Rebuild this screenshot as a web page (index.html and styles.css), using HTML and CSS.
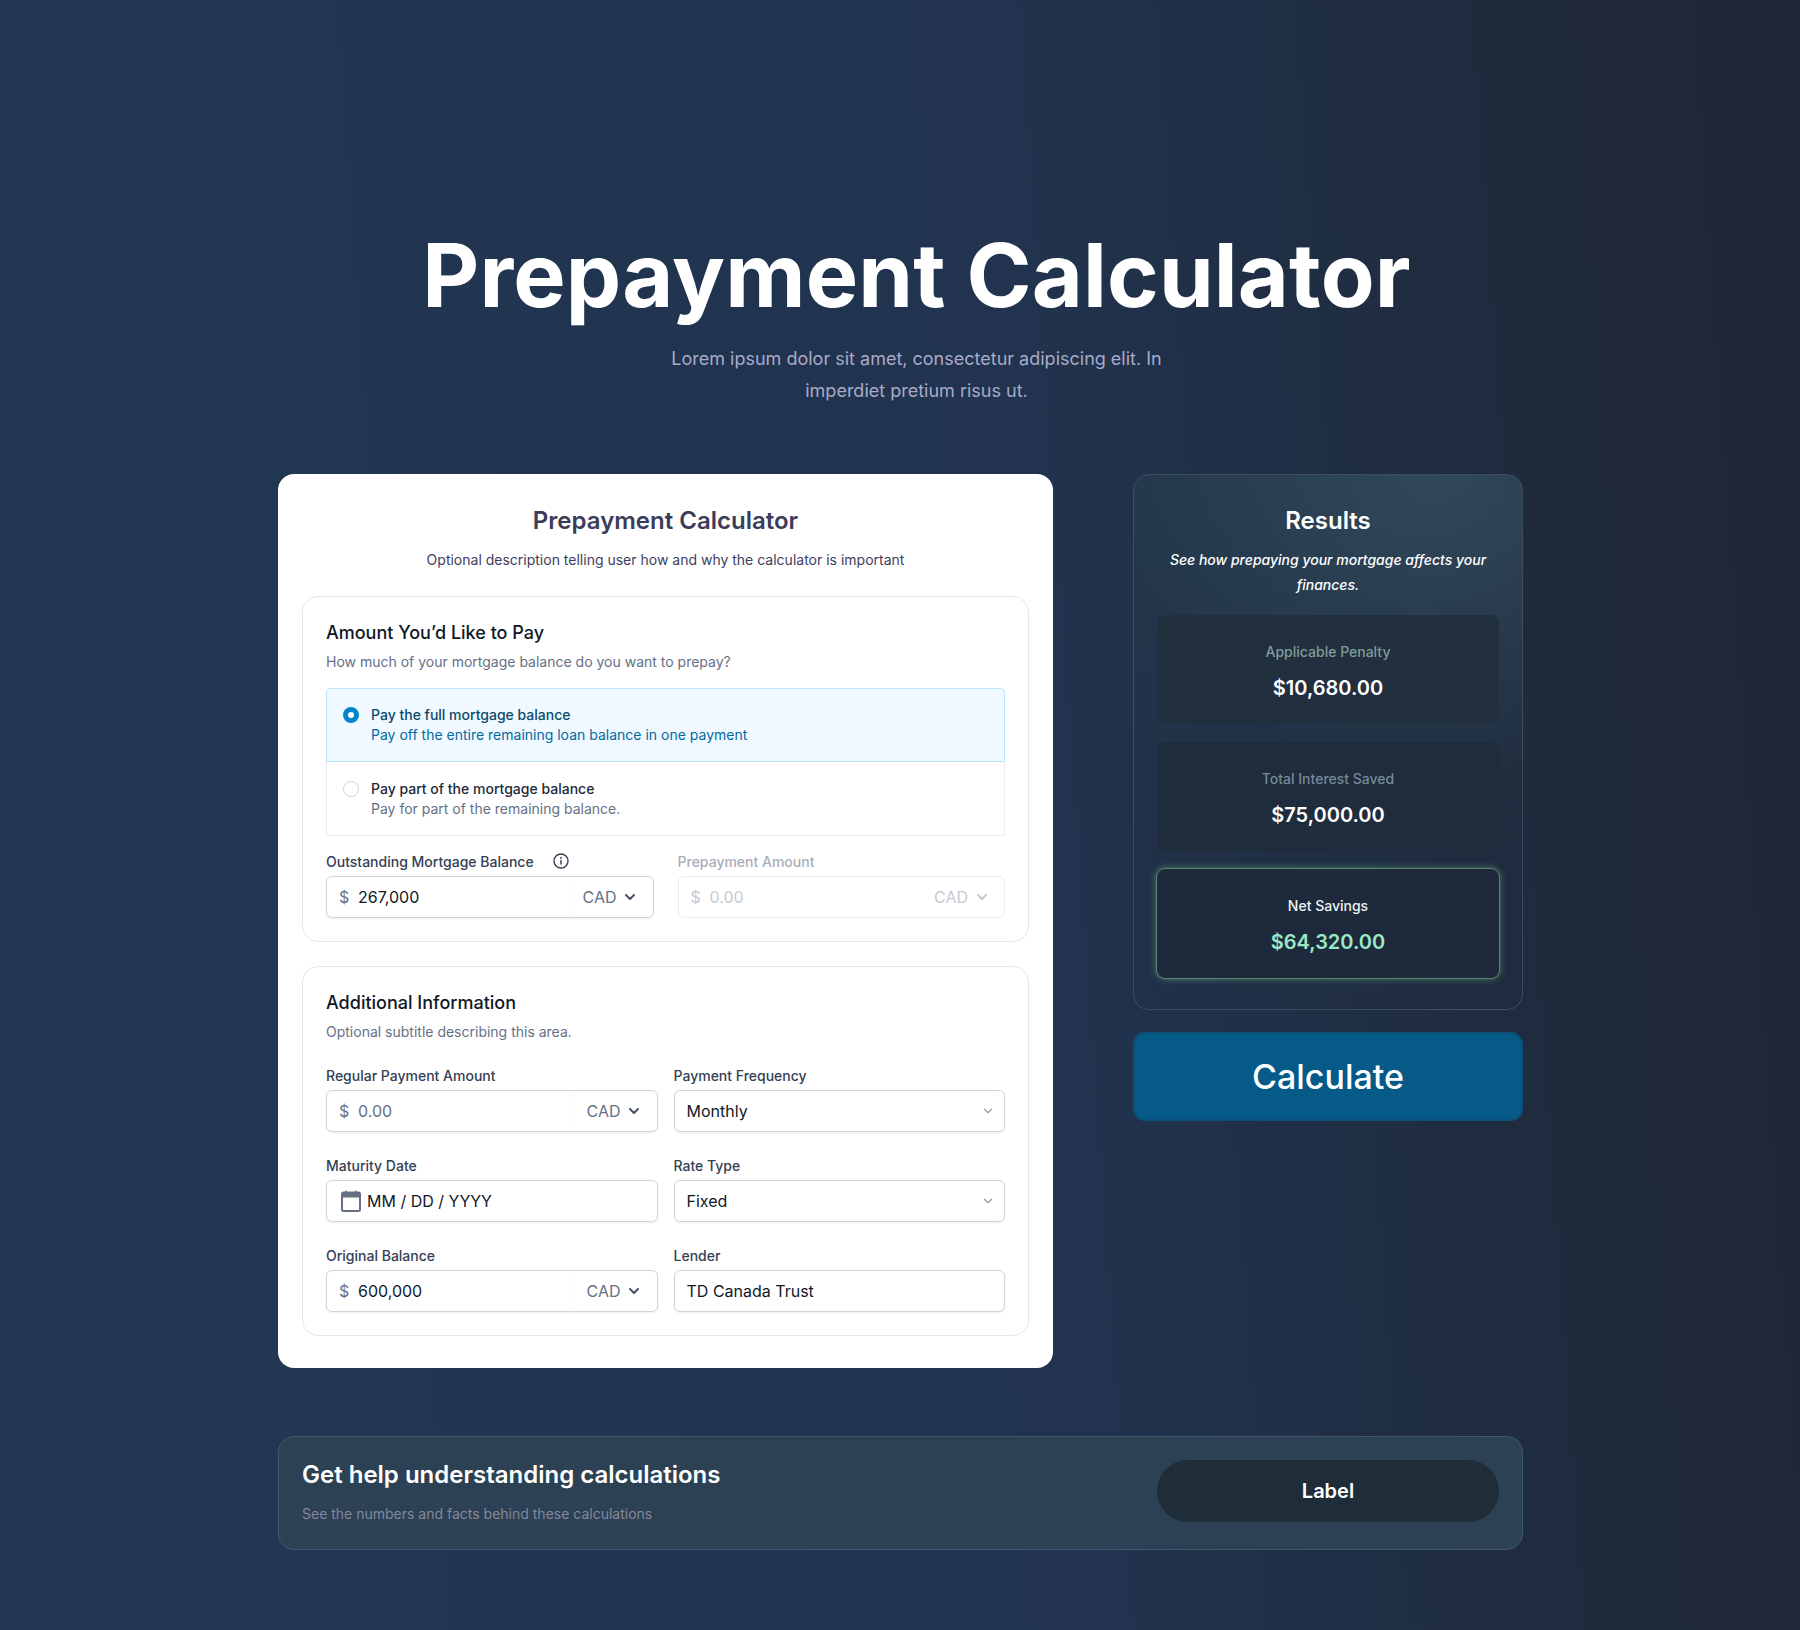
FILE: index.html
```html
<!DOCTYPE html>
<html lang="en">
<head>
<meta charset="utf-8">
<title>Prepayment Calculator</title>
<link rel="stylesheet" href="styles.css">
</head>
<body>
<div class="page">
  <header class="hero">
    <h1>Prepayment Calculator</h1>
    <p>Lorem ipsum dolor sit amet, consectetur adipiscing elit. In imperdiet pretium risus ut.</p>
  </header>

  <main class="columns">
    <section class="card">
      <h2>Prepayment Calculator</h2>
      <p class="card-desc">Optional description telling user how and why the calculator is important</p>

      <div class="panel">
        <h3>Amount You’d Like to Pay</h3>
        <p class="panel-sub">How much of your mortgage balance do you want to prepay?</p>

        <div class="radios">
          <div class="radio-row selected">
            <span class="radio"></span>
            <div>
              <div class="radio-title">Pay the full mortgage balance</div>
              <div class="radio-sub">Pay off the entire remaining loan balance in one payment</div>
            </div>
          </div>
          <div class="radio-row">
            <span class="radio"></span>
            <div>
              <div class="radio-title">Pay part of the mortgage balance</div>
              <div class="radio-sub">Pay for part of the remaining balance.</div>
            </div>
          </div>
        </div>

        <div class="grid wide-gap">
          <div class="field">
            <label class="label">Outstanding Mortgage Balance
              <svg class="info" viewBox="0 0 16 16" fill="none"><circle cx="8" cy="8" r="7" stroke="#344054" stroke-width="1.4"/><path d="M8 7.4v3.6" stroke="#344054" stroke-width="1.4" stroke-linecap="round"/><circle cx="8" cy="5" r=".9" fill="#344054"/></svg>
            </label>
            <div class="input">
              <span class="cur">$</span><span class="val">267,000</span>
              <span class="addon">CAD<svg class="chev" viewBox="0 0 16 16" fill="none"><path d="M4 6l4 4 4-4" stroke="#475467" stroke-width="2" stroke-linecap="round" stroke-linejoin="round"/></svg></span>
            </div>
          </div>
          <div class="field disabled">
            <label class="label">Prepayment Amount</label>
            <div class="input">
              <span class="cur">$</span><span class="val">0.00</span>
              <span class="addon">CAD<svg class="chev" viewBox="0 0 16 16" fill="none"><path d="M4 6l4 4 4-4" stroke="#c4c9d2" stroke-width="2" stroke-linecap="round" stroke-linejoin="round"/></svg></span>
            </div>
          </div>
        </div>
      </div>

      <div class="panel">
        <h3>Additional Information</h3>
        <p class="panel-sub">Optional subtitle describing this area.</p>

        <div class="grid form-grid">
          <div class="field">
            <label class="label">Regular Payment Amount</label>
            <div class="input">
              <span class="cur">$</span><span class="val muted">0.00</span>
              <span class="addon">CAD<svg class="chev" viewBox="0 0 16 16" fill="none"><path d="M4 6l4 4 4-4" stroke="#475467" stroke-width="2" stroke-linecap="round" stroke-linejoin="round"/></svg></span>
            </div>
          </div>
          <div class="field">
            <label class="label">Payment Frequency</label>
            <div class="input select">
              <span class="val">Monthly</span>
              <svg class="chev-sm" viewBox="0 0 10 10" fill="none"><path d="M1.5 3.2L5 6.8l3.5-3.6" stroke="#98a2b3" stroke-width="1.4" stroke-linecap="round" stroke-linejoin="round"/></svg>
            </div>
          </div>
          <div class="field">
            <label class="label">Maturity Date</label>
            <div class="input date">
              <svg class="cal" viewBox="0 0 20 22" fill="none"><rect x="1" y="2.5" width="18" height="18.5" rx="1.5" stroke="#667085" stroke-width="2"/><rect x="1" y="2.5" width="18" height="5" fill="#667085"/><path d="M5 .5v3M15 .5v3" stroke="#667085" stroke-width="1.4"/></svg>
              <span class="val">MM / DD / YYYY</span>
            </div>
          </div>
          <div class="field">
            <label class="label">Rate Type</label>
            <div class="input select">
              <span class="val">Fixed</span>
              <svg class="chev-sm" viewBox="0 0 10 10" fill="none"><path d="M1.5 3.2L5 6.8l3.5-3.6" stroke="#98a2b3" stroke-width="1.4" stroke-linecap="round" stroke-linejoin="round"/></svg>
            </div>
          </div>
          <div class="field">
            <label class="label">Original Balance</label>
            <div class="input">
              <span class="cur">$</span><span class="val">600,000</span>
              <span class="addon">CAD<svg class="chev" viewBox="0 0 16 16" fill="none"><path d="M4 6l4 4 4-4" stroke="#475467" stroke-width="2" stroke-linecap="round" stroke-linejoin="round"/></svg></span>
            </div>
          </div>
          <div class="field">
            <label class="label">Lender</label>
            <div class="input select">
              <span class="val">TD Canada Trust</span>
            </div>
          </div>
        </div>
      </div>
    </section>

    <aside class="side">
      <section class="results">
        <h2>Results</h2>
        <p class="results-desc">See how prepaying your mortgage affects your finances.</p>
        <div class="stats">
          <div class="stat stat-a">
            <div class="stat-label">Applicable Penalty</div>
            <div class="stat-value">$10,680.00</div>
          </div>
          <div class="stat stat-b">
            <div class="stat-label">Total Interest Saved</div>
            <div class="stat-value">$75,000.00</div>
          </div>
          <div class="stat stat-c">
            <div class="stat-label">Net Savings</div>
            <div class="stat-value">$64,320.00</div>
          </div>
        </div>
      </section>
      <button class="calc" type="button">Calculate</button>
    </aside>
  </main>

  <section class="help">
    <div>
      <h2>Get help understanding calculations</h2>
      <p>See the numbers and facts behind these calculations</p>
    </div>
    <button class="pill" type="button">Label</button>
  </section>
</div>
</body>
</html>
```

FILE: styles.css
```css
* { box-sizing: border-box; }
html, body { margin: 0; padding: 0; }
body {
  font-family: Inter, "Liberation Sans", sans-serif;
  background: linear-gradient(86deg, #223853 0%, #21334e 58%, #1f2a3c 85%, #1f2739 100%);
  min-height: 1630px;
  color: #101828;
}
.page { width: 1245px; margin-left: 278px; padding-bottom: 80px; }
h1, h2, h3, p { margin: 0; }

.hero { padding: 222px 0 0 32px; text-align: center; }
.hero h1 { font-size: 88px; line-height: 106px; font-weight: 700; letter-spacing: .15px; color: #fff; }
.hero p { width: 520px; margin: 15px auto 0; font-size: 18px; line-height: 32px; color: #a9a9c9; }

.columns { display: flex; align-items: flex-start; gap: 80px; margin-top: 67px; }

.card { width: 775px; height: 894px; padding: 24px; background: #fff; border-radius: 16px; }
.card h2 { margin-top: 1px; font-size: 24px; line-height: 44px; font-weight: 600; color: #3c3c5a; text-align: center; }
.card-desc { margin-top: 5px; font-size: 14px; line-height: 24px; color: #40405e; text-align: center; }

.panel { margin-top: 24px; padding: 23px; border: 1px solid #e4e7ec; border-radius: 16px; }
.panel h3 { font-size: 18px; line-height: 26px; font-weight: 500; color: #101828; }
.panel-sub { margin-top: 4px; font-size: 14px; line-height: 24px; color: #667085; }

.radios { margin-top: 14px; }
.radio-row { display: flex; gap: 12px; height: 74px; padding: 17px 16px 0; border: 1px solid #eaecf0; border-top: 0; }
.radio-row.selected { padding-top: 16px; border: 1px solid #b9e6fe; border-radius: 4px 4px 0 0; background: #f0f9ff; }
.radio { flex: none; width: 16px; height: 16px; margin-top: 2px; border: 1px solid #d0d5dd; border-radius: 50%; background: #fff; }
.selected .radio { border: 5px solid #0086c9; }
.radio-title { font-size: 14px; line-height: 20px; font-weight: 500; color: #1d2939; }
.radio-sub { font-size: 14px; line-height: 20px; color: #667085; }
.selected .radio-title { color: #0b4a6f; }
.selected .radio-sub { color: #026aa2; }

.grid { display: grid; grid-template-columns: 1fr 1fr; }
.wide-gap { column-gap: 24px; margin-top: 16px; }
.form-grid { column-gap: 16px; row-gap: 24px; margin-top: 22px; }

.label { display: flex; align-items: center; height: 20px; margin-bottom: 4px; padding-bottom: 1px; font-size: 14px; font-weight: 500; color: #344054; }
.info { width: 16px; height: 16px; margin-left: 19px; margin-top: -1px; }

.input {
  display: flex; align-items: center; height: 42px; padding-left: 12px;
  background: #fff; border: 1px solid #d0d5dd; border-radius: 6px;
  box-shadow: 0 1px 2px rgba(16, 24, 40, .08);
  font-size: 16px;
}
.cur { width: 19px; color: #667085; }
.val { color: #101828; }
.val.muted { color: #667085; }
.addon {
  display: flex; align-items: center; gap: 6px; width: 84px; height: 100%; margin-left: auto;
  padding-left: 13px; border-left: 1px solid #fafbfc; color: #667085;
}
.chev { width: 16px; height: 16px; }
.select { padding-right: 11px; justify-content: space-between; }
.chev-sm { width: 10px; height: 10px; }
.date { padding-left: 14px; gap: 6px; }
.cal { width: 20px; height: 22px; }

.disabled .label { color: #a8adb8; }
.disabled .input { border-color: #eaecf0; box-shadow: none; }
.disabled .addon { border-left-color: transparent; }
.disabled .cur, .disabled .val, .disabled .addon { color: #c4c9d2; }

.side { display: flex; flex-direction: column; gap: 22px; width: 390px; }
.results {
  height: 536px; padding: 24px 23px; border: 1px solid #3c4e5d; border-radius: 16px;
  background:
    radial-gradient(330px 300px at 78% 0%, rgba(62, 92, 112, .5), rgba(62, 92, 112, 0) 100%),
    linear-gradient(180deg, rgba(38, 60, 74, .55), rgba(31, 43, 60, .2) 75%);
  text-align: center;
}
.results h2 { font-size: 24px; line-height: 44px; font-weight: 600; color: #fff; }
.results-desc { margin-top: 4px; font-size: 14px; line-height: 25px; font-weight: 500; font-style: italic; color: #fff; }
.stats { display: flex; flex-direction: column; gap: 18px; margin-top: 18px; }
.stat { height: 109px; padding-top: 27px; border-radius: 8px; }
.stat-a { background: #212f3f; }
.stat-b { background: #1f2c3c; }
.stat-c { background: #1e2a3b; box-shadow: 0 0 0 1px rgba(100, 150, 115, .75), 0 0 7px 1px rgba(120, 200, 150, .5); }
.stat-label { font-size: 14px; line-height: 20px; font-weight: 500; }
.stat-a .stat-label { color: #7f9d98; }
.stat-b .stat-label { color: #76889a; }
.stat-c .stat-label { color: #eef2f4; }
.stat-value { margin-top: 10px; font-size: 20px; line-height: 32px; font-weight: 600; color: #fff; }
.stat-c .stat-value { color: #9ae8c6; }

.calc {
  height: 89px; padding-top: 1px; border: 2px solid #0a5078; border-radius: 12px; background: #065a87;
  font-family: inherit; font-size: 34px; font-weight: 500; color: #fff;
}

.help {
  display: flex; align-items: center; justify-content: space-between;
  height: 114px; margin-top: 68px; padding: 0 23px;
  background: #2c4153; border: 1px solid #40566a; border-radius: 16px;
}
.help h2 { font-size: 24px; line-height: 29px; font-weight: 600; color: #fff; }
.help p { margin-top: 13px; font-size: 14px; line-height: 24px; color: #85869f; }
.pill {
  width: 342px; height: 62px; margin-bottom: 4px; border: 0; border-radius: 31px; background: #1f2d39;
  font-family: inherit; font-size: 20px; font-weight: 600; color: #fff;
}
```
